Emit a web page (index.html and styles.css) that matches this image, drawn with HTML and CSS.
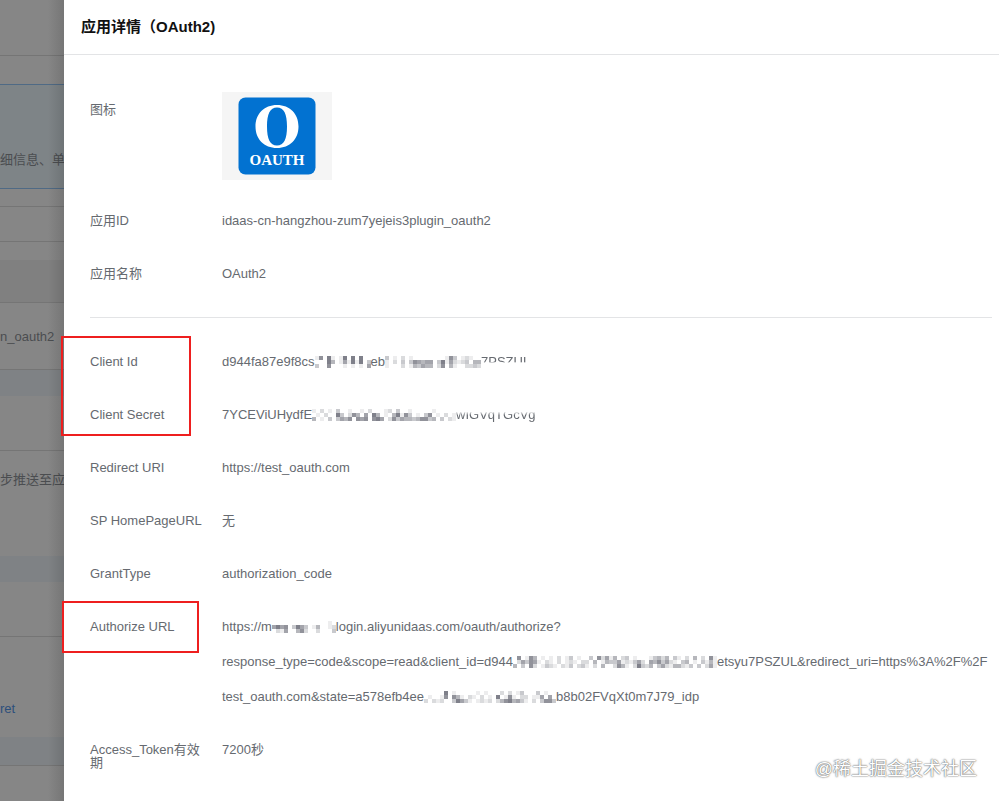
FILE: index.html
```html
<!DOCTYPE html>
<html lang="zh-CN">
<head>
    <meta charset="UTF-8">
    <meta name="viewport" content="width=device-width, initial-scale=1.0">
    <title>应用详情（OAuth2)</title>
    <link rel="stylesheet" href="styles.css">
</head>
<body>

    <aside class="backdrop">
        <div class="strip top-bar"></div>
        <div class="strip spacer"></div>
        <div class="strip notice">细信息、单</div>
        <div class="strip spacer-small"></div>
        <div class="strip search"></div>
        <div class="strip spacer-small no-line"></div>
        <div class="strip table-head"></div>
        <div class="strip app-name">n_oauth2</div>
        <div class="strip band"></div>
        <div class="strip panel-title"></div>
        <div class="strip sync">步推送至应</div>
        <div class="strip band"></div>
        <div class="strip panel-title"></div>
        <div class="strip secret"><a href="#">ret</a></div>
        <div class="strip band band-line"></div>
    </aside>

    <main class="drawer">
        <header class="drawer-header">
            <h2>应用详情（OAuth2)</h2>
        </header>

        <div class="details">
            <dl class="group">
                <div class="row">
                    <dt>图标</dt>
                    <dd>
                        <div class="app-icon">
                            <svg width="78" height="78" viewBox="0 0 78 78" role="img" aria-label="OAUTH">
                                <rect x="0.500" y="0.500" width="77" height="77" rx="7" fill="#0272d1"/>
                                <path fill="#fff" fill-rule="evenodd" d="M39 8C52 8 60.500 17 60.500 29.500S52 51 39 51S17.500 42 17.500 29.500S26 8 39 8ZM39 10.500C32 10.500 29 17 29 29.500S32 48.500 39 48.500S49 42 49 29.500S46 10.500 39 10.500Z"/>
                                <text class="logo-text" x="39" y="68" text-anchor="middle">OAUTH</text>
                            </svg>
                        </div>
                    </dd>
                </div>
                <div class="row">
                    <dt>应用ID</dt>
                    <dd>idaas-cn-hangzhou-zum7yejeis3plugin_oauth2</dd>
                </div>
                <div class="row">
                    <dt>应用名称</dt>
                    <dd>OAuth2</dd>
                </div>
            </dl>

            <dl class="group">
                <div class="marked marked-client">
                    <div class="row">
                        <dt>Client Id</dt>
                        <dd>d944fa87e9f8cs<span class="mosaic" data-cells="16071017070700/00074015171703/30060001010105"></span>eb<span class="mosaic" data-cells="301020100000000163012100/102030365455037152123044/100020143544026041002232"></span><span class="cut-bottom">7PSZUL.</span></dd>
                    </div>
                    <div class="row">
                        <dt>Client Secret</dt>
                        <dd>7YCEViUHydfE<span class="mosaic" data-cells="102010300100102000120300100000100000/010200730264050740104716301036010201/401030354606560675026354434663403021"></span><span class="cut-top">wIGVqTGcVg</span></dd>
                    </div>
                </div>
                <div class="row">
                    <dt>Redirect URI</dt>
                    <dd>https://test_oauth.com</dd>
                </div>
                <div class="row">
                    <dt>SP HomePageURL</dt>
                    <dd>无</dd>
                </div>
                <div class="row">
                    <dt>GrantType</dt>
                    <dd>authorization_code</dd>
                </div>
                <div class="row marked marked-url">
                    <dt>Authorize URL</dt>
                    <dd>https://m<span class="mosaic" data-cells="0000000000000010/5756037530140012/0215004620020003"></span>login.aliyunidaas.com/oauth/authorize?<br>response_type=code&amp;scope=read&amp;client_id=d944<span class="mosaic" data-cells="060164010102013010030625140230100013424031020402061/025365102102012102204014335121352054635210340103141/403062013210213023102040026410273240352144213030251"></span>etsyu7PSZUL&amp;redirect_uri=https%3A%2F%2F<br>test_oauth.com&amp;state=a578efb4ee<span class="mosaic" data-cells="000007010000010100020201300030100/010016064102102010701610220115050/202120037531012120246745310203663"></span>b8b02FVqXt0m7J79_idp</dd>
                </div>
                <div class="row">
                    <dt>Access_Token有效期</dt>
                    <dd>7200秒</dd>
                </div>
            </dl>
        </div>
    </main>

    <div class="watermark">@稀土掘金技术社区</div>

    <script src="script.js"></script>
</body>
</html>
```
FILE: script.js
```js
// Each digit is one 4px cell, 0 = empty, 9 = darkest
const CELL = 4;

document.querySelectorAll('.mosaic').forEach(span => {
    const rows = span.dataset.cells.split('/');
    const width = rows[0].length * CELL;
    const height = rows.length * CELL;
    let rects = '';
    rows.forEach((row, y) => {
        row.split('').forEach((level, x) => {
            if (level !== '0') {
                rects += `<rect x="${x * CELL}" y="${y * CELL}" width="${CELL}" height="${CELL}" fill="#5a5c68" fill-opacity="${level / 9}"/>`;
            }
        });
    });
    span.innerHTML = `<svg width="${width}" height="${height}" aria-hidden="true">${rects}</svg>`;
});
```
FILE: styles.css
```css
*,
*::before,
*::after {
    box-sizing: border-box;
}
body {
    margin: 0;
    min-height: 100vh;
    display: flex;
    position: relative;
    font-family: "Liberation Sans", "Noto Sans CJK SC", sans-serif;
    font-size: 13px;
    color: #666a70;
    background: #fff;
}

/* dimmed page behind the drawer */
.backdrop {
    position: relative;
    width: 64px;
    flex-shrink: 0;
    overflow: hidden;
    background: #868686;
    color: #4b4d50;
    white-space: nowrap;
}
.backdrop::after {
    content: "";
    position: absolute;
    top: 0;
    right: 0;
    bottom: 0;
    width: 16px;
    background: linear-gradient(to right, rgba(0, 0, 0, 0), rgba(0, 0, 0, 0.12));
}
.strip {
    display: flex;
    align-items: center;
    border-bottom: 1px solid #757575;
}
.top-bar {
    height: 56px;
}
.spacer {
    height: 29px;
    border-color: #4f6a85;
}
.notice {
    height: 104px;
    padding-top: 44px;
    border-color: #4f6a85;
    background: #7e8487;
}
.spacer-small {
    height: 18px;
}
.search {
    height: 35px;
}
.no-line {
    border-bottom: none;
}
.table-head {
    height: 43px;
    background: #808080;
}
.app-name {
    height: 67px;
}
.band {
    height: 26px;
    border-bottom: none;
    background: #7f8285;
}
.panel-title {
    height: 55px;
}
.sync {
    height: 105px;
    align-items: flex-start;
    padding-top: 18px;
    border-bottom: none;
}
.secret {
    height: 100px;
    padding-top: 42px;
    border-bottom: none;
}
.secret a {
    color: #2c4f7c;
    text-decoration: none;
}
.band-line {
    height: 29px;
    border-bottom: 1px solid #757575;
}

/* drawer */
.drawer {
    flex: 1;
    min-width: 0;
}
.drawer-header {
    display: flex;
    align-items: center;
    height: 55px;
    padding: 0 17px 3px;
    border-bottom: 1px solid #e3e4e6;
}
.drawer-header h2 {
    margin: 0;
    font-size: 15px;
    color: #111;
}
.details {
    padding: 37px 7px 0 26px;
}
.group {
    margin: 0;
    display: flex;
    flex-direction: column;
    gap: 18px;
}
.group + .group {
    margin-top: 26px;
    padding-top: 26px;
    border-top: 1px solid #e3e4e6;
}
.row {
    display: grid;
    grid-template-columns: 132px 1fr;
}
.row dt {
    padding: 11px 16px 0 0;
    line-height: 13px;
}
.row dd {
    margin: 0;
    line-height: 35px;
    white-space: nowrap;
}
.app-icon {
    display: flex;
    align-items: center;
    justify-content: center;
    width: 110px;
    height: 88px;
    margin-bottom: 5px;
    background: #f5f5f5;
}
.logo-text {
    font-family: "Liberation Serif", serif;
    font-size: 15px;
    font-weight: bold;
    fill: #fff;
}

/* red frames around the values to copy */
.marked {
    position: relative;
}
.marked-client {
    display: flex;
    flex-direction: column;
    gap: 18px;
}
.marked::before {
    content: "";
    position: absolute;
    border: 2px solid #ee1f1f;
}
.marked-client::before {
    top: -8px;
    bottom: -4px;
    left: -29px;
    width: 130px;
}
.marked-url::before {
    top: -8px;
    left: -28px;
    width: 137px;
    height: 52px;
}

/* pixelated secrets */
.mosaic svg {
    vertical-align: -2px;
}
.cut-bottom {
    -webkit-mask-image: linear-gradient(#000 50%, transparent 60%);
    mask-image: linear-gradient(#000 50%, transparent 60%);
}
.cut-top {
    -webkit-mask-image: linear-gradient(transparent 30%, #000 55%);
    mask-image: linear-gradient(transparent 30%, #000 55%);
}

.watermark {
    position: absolute;
    right: 22px;
    bottom: 19px;
    font-size: 18px;
    line-height: 26px;
    color: #fff;
    text-shadow: 0 0 1px #555, 0 0 2px #777;
}
```
